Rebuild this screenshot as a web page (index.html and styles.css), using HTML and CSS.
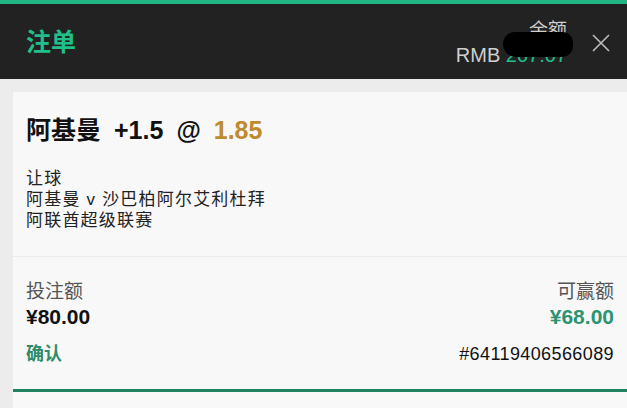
FILE: index.html
```html
<!DOCTYPE html>
<html lang="zh">
<head>
  <meta charset="UTF-8">
  <meta name="viewport" content="width=device-width, initial-scale=1.0">
  <title>注单</title>
  <link rel="stylesheet" href="styles.css">
</head>
<body>

  <!-- Header -->
  <div class="header">
    <h1 class="title">注单</h1>
    <div class="header-right">
      <div class="balance">
        <div class="balance-label">余额</div>
        <div class="balance-value">RMB <span class="balance-amount">207.07</span></div>
        <div class="redact"></div>
      </div>
      <svg class="close" width="18" height="18" viewBox="0 0 18 18">
        <path d="M1 1 L17 17 M17 1 L1 17" stroke="#bdbdbd" stroke-width="1.6" fill="none"/>
      </svg>
    </div>
  </div>

  <!-- Bet slip card -->
  <div class="card">
    <div class="selection">
      <div class="pick">
        <span>阿基曼</span>
        <span class="line">+1.5</span>
        <span class="at">@</span>
        <span class="odds">1.85</span>
      </div>
      <div class="market">
        <p>让球</p>
        <p>阿基曼 v 沙巴柏阿尔艾利杜拜</p>
        <p>阿联酋超级联赛</p>
      </div>
    </div>

    <div class="summary">
      <div class="amounts">
        <div class="amount">
          <div class="amount-label">投注额</div>
          <div class="amount-value">¥80.00</div>
        </div>
        <div class="amount amount-right">
          <div class="amount-label">可赢额</div>
          <div class="amount-value win">¥68.00</div>
        </div>
      </div>
      <div class="status-row">
        <span class="status">确认</span>
        <span class="ref">#64119406566089</span>
      </div>
    </div>
  </div>

</body>
</html>
```

FILE: styles.css
```css
* {
  margin: 0;
  padding: 0;
  box-sizing: border-box;
}
body {
  font-family: "Liberation Sans", "Noto Sans CJK SC", sans-serif;
  background-color: #ececec;
  color: #111;
  height: 408px;
  overflow: hidden;
}
.header {
  background-color: #222;
  border-top: 4px solid #22b583;
  height: 79px;
  display: flex;
  align-items: center;
  justify-content: space-between;
  padding: 0 17px 0 26px;
}
.title {
  color: #20c08a;
  font-size: 25px;
  font-weight: bold;
  line-height: 30px;
}
.header-right {
  display: flex;
  align-items: center;
  gap: 25px;
}
.balance {
  position: relative;
  text-align: right;
  font-size: 19px;
  line-height: 24px;
  color: #cfcfcf;
  margin-top: 2px;
}
.balance-value {
  font-size: 20px;
}
.balance-amount {
  color: #20c08a;
}
.redact {
  position: absolute;
  right: -6px;
  top: 13px;
  width: 70px;
  height: 25px;
  background-color: #000;
  border-radius: 13px 11px 12px 14px;
}
.close {
  display: block;
  margin-top: 2px;
}
.card {
  margin: 13px 0 0 13px;
  background-color: #f8f8f8;
  height: 330px;
}
.selection {
  padding: 23px 13px 25px 13px;
  border-bottom: 1px solid #ebebeb;
}
.pick {
  font-size: 25px;
  font-weight: bold;
  line-height: 30px;
  display: flex;
  gap: 13px;
}
.odds {
  color: #c08a2e;
}
.market {
  margin-top: 23px;
  font-size: 17px;
  letter-spacing: 1.2px;
  line-height: 21px;
  color: #222;
}
.summary {
  padding: 23px 13px 23px 13px;
  border-bottom: 3px solid #1f8363;
}
.amounts {
  display: flex;
  justify-content: space-between;
}
.amount-right {
  text-align: right;
}
.amount-label {
  font-size: 19px;
  line-height: 24px;
  color: #555;
}
.amount-value {
  font-size: 21px;
  font-weight: bold;
  line-height: 26px;
  color: #111;
}
.win {
  color: #2b9473;
}
.status-row {
  display: flex;
  justify-content: space-between;
  align-items: center;
  margin-top: 12px;
  line-height: 24px;
}
.status {
  color: #2e8b6a;
  font-size: 18px;
  font-weight: bold;
}
.ref {
  font-size: 18px;
  letter-spacing: 0.4px;
  color: #111;
}
```
